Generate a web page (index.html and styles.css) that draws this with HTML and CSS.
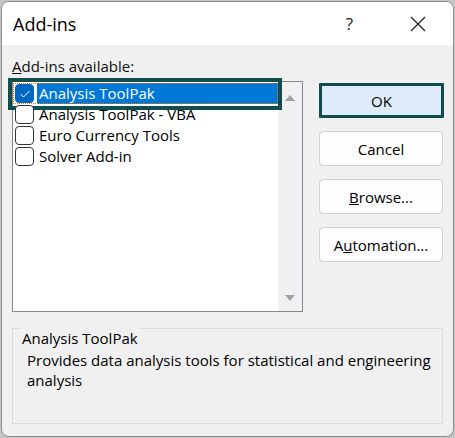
FILE: index.html
```html
<!DOCTYPE html>
<html lang="en">
  <head>
    <meta charset="UTF-8" />
    <title>Add-ins</title>
    <link rel="stylesheet" href="styles.css">
  </head>
  <body>
    <div class="window">
      <div class="titlebar">
        <span class="title">Add-ins</span>
        <span class="help">?</span>
        <svg class="close" width="16" height="16" viewBox="0 0 16 16">
          <path d="M1 1 L15 15 M15 1 L1 15" stroke="#222" stroke-width="1.3" fill="none" />
        </svg>
      </div>

      <div class="content">
        <div class="list-label"><u>A</u>dd-ins available:</div>

        <div class="main">
          <div class="listbox">
            <div class="items">
              <div class="item selected">
                <span class="check checked">
                  <svg width="12" height="10" viewBox="0 0 12 10">
                    <path d="M1.5 5 L4.5 8 L10.5 2" stroke="#fff" stroke-width="1" fill="none" />
                  </svg>
                </span>
                <span class="item-text">Analysis ToolPak</span>
                <span class="frame"></span>
              </div>
              <div class="item">
                <span class="check"></span>
                <span class="item-text">Analysis ToolPak - VBA</span>
              </div>
              <div class="item">
                <span class="check"></span>
                <span class="item-text">Euro Currency Tools</span>
              </div>
              <div class="item">
                <span class="check"></span>
                <span class="item-text">Solver Add-in</span>
              </div>
            </div>
            <div class="scrollbar">
              <span class="arrow up"></span>
              <span class="arrow down"></span>
            </div>
          </div>

          <div class="buttons">
            <button class="btn btn-default">OK</button>
            <button class="btn">Cancel</button>
            <button class="btn"><u>B</u>rowse...</button>
            <button class="btn">A<u>u</u>tomation...</button>
          </div>
        </div>

        <div class="group">
          <span class="group-title">Analysis ToolPak</span>
          <p class="group-text">Provides data analysis tools for statistical and engineering analysis</p>
        </div>
      </div>
    </div>
  </body>
</html>
```

FILE: styles.css
```css
* {
  margin: 0;
  padding: 0;
  box-sizing: border-box;
}

body {
  background: #c4c4c4;
  font-family: "Open Sans", "Noto Sans", sans-serif;
  font-size: 15px;
  color: #000;
}

.window {
  width: 453px;
  height: 436px;
  margin: 1px 0 0 1px;
  border: 1px solid #8e8e8e;
  border-radius: 8px;
  overflow: hidden;
  background: #f0f0f0;
}

.titlebar {
  height: 43px;
  background: #fff;
  display: flex;
  align-items: center;
  padding-left: 11px;
}

.title {
  font-size: 18px;
  flex: 1;
}

.help {
  font-size: 17px;
  color: #222;
  margin-right: 57px;
}

.close {
  margin-right: 27px;
}

.content {
  padding: 11px 9px 0 10px;
}

.list-label {
  line-height: 20px;
  margin-bottom: 5px;
  color: #111;
}

.main {
  display: flex;
  gap: 16px;
}

.listbox {
  width: 291px;
  height: 231px;
  border: 1px solid #828790;
  background: #fff;
  display: flex;
}

.items {
  flex: 1;
  padding-top: 1px;
}

.item {
  position: relative;
  height: 21px;
  display: flex;
  align-items: center;
  padding-left: 2px;
}

.check {
  width: 19px;
  height: 19px;
  border: 1px solid #333;
  border-radius: 4px;
  background: #fff;
  display: flex;
  align-items: center;
  justify-content: center;
}

.check.checked {
  background: #0067c0;
  border-color: #0067c0;
}

.item-text {
  margin-left: 3px;
  line-height: 21px;
  padding: 0 3px 0 2px;
}

.item.selected {
  outline: 1px dotted #e07a00;
  outline-offset: -1px;
}

.item.selected .item-text {
  flex: 1;
  background: #0078d7;
  color: #fff;
  height: 21px;
}

/* highlight frame around the selected row */
.frame {
  position: absolute;
  left: -5px;
  top: -5px;
  right: -4px;
  bottom: -6px;
  border: 4px solid #124d4d;
  pointer-events: none;
}

.scrollbar {
  width: 24px;
  background: #f0f0f0;
  display: flex;
  flex-direction: column;
  justify-content: space-between;
  align-items: center;
  padding: 13px 0 10px;
}

.arrow {
  width: 0;
  height: 0;
  border-left: 5px solid transparent;
  border-right: 5px solid transparent;
}

.arrow.up {
  border-bottom: 6px solid #a3a3a3;
}

.arrow.down {
  border-top: 6px solid #a3a3a3;
}

.buttons {
  display: flex;
  flex-direction: column;
  gap: 13px;
  padding-top: 2px;
}

.btn {
  width: 124px;
  height: 35px;
  background: #fdfdfd;
  border: 1px solid #d0d0d0;
  border-radius: 4px;
  font-family: inherit;
  font-size: 15px;
  color: #000;
}

.btn-default {
  width: 125px;
  background: #deecf9;
  border: 3px solid #124d4d;
  border-radius: 1px;
}

.group {
  margin-top: 16px;
  width: 431px;
  height: 96px;
  border: 1px solid #dcdcdc;
}

.group-title {
  display: inline-block;
  margin: -1px 0 0 9px;
  background: #f0f0f0;
  line-height: 20px;
  vertical-align: top;
}

.group-text {
  padding: 1px 8px 0 14px;
  line-height: 20px;
}
```
